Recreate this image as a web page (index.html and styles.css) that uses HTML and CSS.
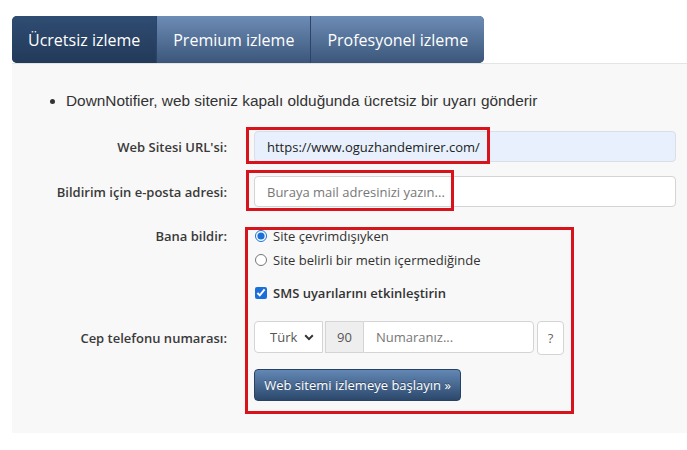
FILE: index.html
```html
<!DOCTYPE html>
<html lang="tr">
<head>
<meta charset="utf-8">
<title>DownNotifier</title>
<link rel="stylesheet" href="styles.css">
</head>
<body>
<nav class="tabs">
  <a class="tab active" href="#">Ücretsiz izleme</a>
  <a class="tab" href="#">Premium izleme</a>
  <a class="tab" href="#">Profesyonel izleme</a>
</nav>
<section class="panel">
  <ul class="intro">
    <li>DownNotifier, web siteniz kapalı olduğunda ücretsiz bir uyarı gönderir</li>
  </ul>
  <form class="form">
    <div class="row row-url">
      <label class="label" for="url">Web Sitesi URL'si:</label>
      <input class="input input-filled" id="url" type="text" value="https://www.oguzhandemirer.com/">
    </div>
    <div class="row row-mail">
      <label class="label" for="mail">Bildirim için e-posta adresi:</label>
      <input class="input" id="mail" type="text" placeholder="Buraya mail adresinizi yazın...">
    </div>
    <div class="row row-notify">
      <span class="label label-top">Bana bildir:</span>
      <div class="options">
        <label class="option"><input type="radio" name="mode" checked> Site çevrimdışıyken</label>
        <label class="option"><input type="radio" name="mode"> Site belirli bir metin içermediğinde</label>
        <label class="option option-sms"><input type="checkbox" checked> SMS uyarılarını etkinleştirin</label>
      </div>
    </div>
    <div class="row row-phone">
      <label class="label" for="phone">Cep telefonu numarası:</label>
      <div class="phone">
        <div class="country">Türk
          <svg class="chevron" width="10" height="7" viewBox="0 0 10 7"><path d="M1.2 1.3 5 5.1 8.8 1.3" fill="none" stroke="#333" stroke-width="2"/></svg>
        </div>
        <span class="prefix">90</span>
        <input class="phone-input" id="phone" type="text" placeholder="Numaranız...">
        <button class="help" type="button">?</button>
      </div>
    </div>
    <div class="row row-submit">
      <span class="label"></span>
      <button class="submit" type="button">Web sitemi izlemeye başlayın »</button>
    </div>
  </form>
  <div class="mark mark-url"></div>
  <div class="mark mark-mail"></div>
  <div class="mark mark-options"></div>
</section>
</body>
</html>
```
FILE: styles.css
```css
* { box-sizing: border-box; }

body {
  margin: 0;
  padding: 16px 0 0 12px;
  background: #fff;
  font-family: "Open Sans", "Liberation Sans", sans-serif;
  color: #333;
}

/* tab strip */
.tabs {
  display: inline-flex;
  height: 47px;
  border-radius: 5px;
  overflow: hidden;
  background: #2f4a6e;
}
.tab {
  display: flex;
  align-items: center;
  padding: 0 16px;
  font-size: 16px;
  color: #fff;
  text-decoration: none;
  background: linear-gradient(#6d8cb6, #3b5679);
  border-left: 1px solid #2c4466;
}
.tab:first-child { border-left: 0; }
.tab.active { background: linear-gradient(#2f4c72, #233a59); }

/* content panel */
.panel {
  position: relative;
  background: #f8f8f8;
  border-top: 1px solid #e4e4e4;
  padding: 27px 11px 32px 0;
}

.intro {
  margin: 0;
  padding-left: 54px;
  font-family: "Liberation Sans", Arial, sans-serif;
  font-size: 15.4px;
  line-height: 20px;
  color: #333;
}

.form { margin-top: 20px; }

.row {
  display: flex;
  align-items: center;
}
.label {
  flex: 0 0 215px;
  text-align: right;
  font-size: 13px;
  font-weight: 600;
  color: #3a3a3a;
  margin-right: 27px;
}
.label-top { align-self: flex-start; line-height: 22px; }

.input {
  flex: 1;
  height: 31px;
  border: 1px solid #d4d4d4;
  border-radius: 4px;
  padding: 0 12px;
  font-family: "Open Sans", sans-serif;
  font-size: 13px;
  color: #222;
  background: #fff;
}
.input::placeholder, .phone-input::placeholder { color: #777; }
.input-filled { background: #e8f0fe; border-color: #d8dfe9; }

.row-mail { margin-top: 14px; }
.row-notify { margin-top: 18px; align-items: flex-start; }

.options { display: flex; flex-direction: column; }
.option {
  display: flex;
  align-items: center;
  height: 22px;
  font-size: 13px;
  color: #333;
}
.option + .option { margin-top: 2px; }
.option input {
  margin: 0 6px 0 1px;
  width: 12px;
  height: 12px;
  accent-color: #1a6fd8;
}
.option-sms { margin-top: 11px !important; font-weight: 600; }

.row-phone { margin-top: 17px; }
.phone { display: flex; align-items: flex-start; }
.country {
  width: 69px;
  height: 32px;
  display: flex;
  align-items: center;
  justify-content: space-between;
  padding: 0 8px 0 15px;
  background: #fff;
  border: 1px solid #d4d4d4;
  border-radius: 4px 0 0 4px;
  font-size: 13px;
  color: #555;
}
.prefix {
  width: 38px;
  height: 32px;
  margin-left: 2px;
  display: flex;
  align-items: center;
  justify-content: center;
  background: #eee;
  border: 1px solid #d4d4d4;
  border-right: 0;
  font-size: 13px;
  color: #555;
}
.phone-input {
  width: 171px;
  height: 32px;
  border: 1px solid #d4d4d4;
  border-radius: 0 4px 4px 0;
  padding: 0 12px;
  font-family: "Open Sans", sans-serif;
  font-size: 13px;
  background: #fff;
}
.help {
  width: 27px;
  height: 34px;
  margin-left: 3px;
  background: #fff;
  border: 1px solid #d4d4d4;
  border-radius: 4px;
  font-family: "Open Sans", sans-serif;
  font-size: 13px;
  color: #666;
  padding: 0;
}

.row-submit { margin-top: 14px; }
.submit {
  width: 207px;
  height: 32px;
  border: 1px solid #2a4262;
  border-radius: 4px;
  background: linear-gradient(#6388b5, #2c486c);
  color: #fff;
  font-family: "Open Sans", sans-serif;
  font-size: 13px;
  text-shadow: 0 -1px 0 rgba(0,0,0,.35);
  padding: 0;
}

/* red highlight frames drawn over the form */
.mark {
  position: absolute;
  border: 3px solid #d7141b;
  pointer-events: none;
}
.mark-url { left: 234px; top: 63px; width: 244px; height: 37px; }
.mark-mail { left: 234px; top: 106px; width: 208px; height: 41px; }
.mark-options { left: 233px; top: 163px; width: 329px; height: 187px; }
```
